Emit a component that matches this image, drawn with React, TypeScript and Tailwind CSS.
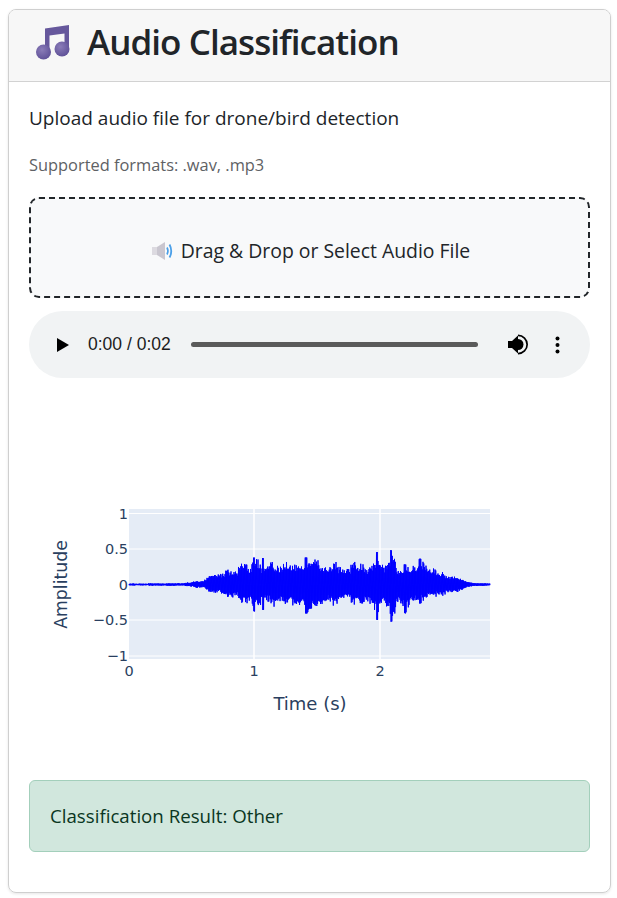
import { useId } from "react";

const PLOT_LEFT = 100;
const PLOT_WIDTH = 361;
const PLOT_TOP = 59;
const PLOT_HEIGHT = 150;
const ZERO_Y = 134.5;

// Envelope of the wave: screen x, height above zero, depth below zero
const ENVELOPE: Array<[number, number, number]> = [
  [129, 1, 1], [183, 1.5, 1.5], [196, 4, 4], [203, 5, 5], [208, 12, 9], [225, 16, 14],
  [240, 21, 19], [254, 27, 27], [270, 26, 24], [290, 26, 26], [306, 27, 29], [325, 25, 25],
  [340, 23, 20], [360, 23, 22], [372, 25, 29], [377, 33, 36], [384, 18, 17], [391, 35, 38],
  [398, 21, 23], [405, 20, 29], [412, 19, 18], [420, 26, 19], [430, 20, 14], [440, 13, 13],
  [450, 12, 11], [460, 7, 7], [470, 2.5, 2.5], [490, 1, 1],
];

const PEAKS = [254, 263, 306, 377, 391, 405, 420];

function envelopeAt(x: number) {
  for (let i = 1; i < ENVELOPE.length; i++) {
    const [x0, t0, b0] = ENVELOPE[i - 1];
    const [x1, t1, b1] = ENVELOPE[i];
    if (x <= x1) {
      const k = (x - x0) / (x1 - x0);
      return [t0 + (t1 - t0) * k, b0 + (b1 - b0) * k];
    }
  }
  return [1, 1];
}

function buildWavePath() {
  let seed = 4711;
  const rand = () => {
    seed = (seed * 16807) % 2147483647;
    return seed / 2147483647;
  };
  let d = "";
  let lobe = 0.85;
  for (let x = 129; x <= 490; x += 0.75) {
    // lobes a few pixels wide, with sharp spikes on top of a solid core
    if (Math.round(x / 0.75) % 6 === 0) lobe = 0.65 + rand() * 0.35;
    const [top, bottom] = envelopeAt(x);
    const peak = PEAKS.some((p) => Math.abs(p - x) < 1);
    const a = peak ? top : top * lobe * (0.62 + 0.38 * rand());
    const b = peak ? bottom : bottom * lobe * (0.62 + 0.38 * rand());
    d += `${d ? "L" : "M"}${x - 29} ${ZERO_Y - a}L${x - 28.7} ${ZERO_Y + b}`;
  }
  return d;
}

const WAVE_PATH = buildWavePath();

function MusicNote() {
  const id = useId();
  return (
    <svg width="36" height="38" viewBox="0 0 36 38" className="shrink-0">
      <defs>
        <radialGradient id={id} cx="0.4" cy="0.35" r="0.75">
          <stop offset="0" stopColor="#8a7cb8" />
          <stop offset="1" stopColor="#5a4c94" />
        </radialGradient>
      </defs>
      <path d="M10 6.5 L34 3 V27 H29.5 V11.5 L14.5 13.5 V31 H10 Z" fill="#66589c" />
      <circle cx="8.5" cy="30" r="7.5" fill={`url(#${id})`} />
      <circle cx="27" cy="27" r="7.5" fill={`url(#${id})`} />
    </svg>
  );
}

function SpeakerEmoji() {
  return (
    <svg width="22" height="20" viewBox="0 0 22 20" className="shrink-0">
      <rect x="1" y="6" width="6" height="8" fill="#dcdae0" />
      <path d="M6 6 L14 1 V19 L6 14 Z" fill="#c9c6cf" />
      <path d="M16 6.5 Q18 10 16 13.5" fill="none" stroke="#4a9fe8" strokeWidth="1.6" />
      <path d="M18.5 3.5 Q22 10 18.5 16.5" fill="none" stroke="#4a9fe8" strokeWidth="1.8" />
    </svg>
  );
}

function AudioPlayer() {
  return (
    <div className="mt-[13px] flex h-[67px] items-center rounded-[34px] bg-[#f1f3f4] pl-[28px] pr-[30px]">
      <svg width="12" height="14" viewBox="0 0 12 14" className="shrink-0">
        <path d="M0 0 L12 7 L0 14 Z" fill="#000" />
      </svg>
      <span className="ml-[19px] w-[83px] shrink-0 font-['Liberation_Sans',sans-serif] text-[17.5px] whitespace-nowrap text-[#1c1c1c]">
        0:00 / 0:02
      </span>
      <div className="ml-[20px] h-[5px] w-[287px] shrink-0 rounded-full bg-[#5a5a5a]" />
      <svg width="21" height="21" viewBox="0 0 21 21" className="ml-[30px] shrink-0">
        <path d="M0 7 H4 L10 1.5 V19.5 L4 14 H0 Z" fill="#000" />
        <path d="M10 0.5 A10 10 0 0 1 10 20.5 V18.8 A8.3 8.3 0 0 0 10 2.2 Z" fill="#000" />
        <path d="M10 5 A5.5 5.5 0 0 1 10 16 Z" fill="#000" />
      </svg>
      <svg width="5" height="18" viewBox="0 0 5 18" className="ml-[26px] shrink-0">
        <circle cx="2.5" cy="2.5" r="2" fill="#000" />
        <circle cx="2.5" cy="9" r="2" fill="#000" />
        <circle cx="2.5" cy="15.5" r="2" fill="#000" />
      </svg>
    </div>
  );
}

function WaveformPlot() {
  const yTicks = [
    { label: "1", y: 63.5 },
    { label: "0.5", y: 99 },
    { label: "0", y: 134.5 },
    { label: "−0.5", y: 170 },
    { label: "−1", y: 206 },
  ];
  const xTicks = [
    { label: "0", x: 100 },
    { label: "1", x: 225 },
    { label: "2", x: 351 },
  ];
  return (
    <svg width="561" height="272" viewBox="0 0 561 272" className="mt-[72px] block">
      <rect x={PLOT_LEFT} y={PLOT_TOP} width={PLOT_WIDTH} height={PLOT_HEIGHT} fill="#e5ecf6" />
      {yTicks.map((t) => (
        <line key={t.label} x1={PLOT_LEFT} x2={PLOT_LEFT + PLOT_WIDTH} y1={t.y} y2={t.y} stroke="#fff" strokeWidth="1" />
      ))}
      {xTicks.slice(1).map((t) => (
        <line key={t.label} x1={t.x} x2={t.x} y1={PLOT_TOP} y2={PLOT_TOP + PLOT_HEIGHT} stroke="#fff" strokeWidth="1.5" />
      ))}
      <path d={WAVE_PATH} fill="none" stroke="#0000ff" strokeWidth="1" />
      <g fill="#2a3f5f" fontFamily="'DejaVu Sans', sans-serif" fontSize="14.5">
        {yTicks.map((t) => (
          <text key={t.label} x="99" y={t.y + 5} textAnchor="end">
            {t.label}
          </text>
        ))}
        {xTicks.map((t) => (
          <text key={t.label} x={t.x} y="226" textAnchor="middle">
            {t.label}
          </text>
        ))}
      </g>
      <g fill="#2a3f5f" fontFamily="'DejaVu Sans', sans-serif">
        <text x="281" y="260" textAnchor="middle" fontSize="18">
          Time (s)
        </text>
        <text x="0" y="0" textAnchor="middle" fontSize="17.3" transform="translate(38 134.5) rotate(-90)">
          Amplitude
        </text>
      </g>
    </svg>
  );
}

export default function App() {
  return (
    <div className="h-[898px] bg-white px-2 pt-[9px] font-['Open_Sans',sans-serif]">
      <div className="h-[884px] w-[603px] overflow-hidden rounded-lg border border-[#cfcfcf] shadow-[0_1px_3px_rgba(0,0,0,0.1)]">
        <div className="flex h-[72px] items-center gap-[16px] border-b border-[#d2d2d2] bg-[#f7f7f7] pb-[9px] pl-[26px]">
          <MusicNote />
          <h1 className="text-[35px] leading-none font-semibold tracking-[-0.95px] whitespace-nowrap text-[#212529]">
            Audio Classification
          </h1>
        </div>
        <div className="px-5 pt-[22px]">
          <p className="text-[19px] leading-[28px] text-[#212529]">
            Upload audio file for drone/bird detection
          </p>
          <p className="mt-[21px] text-[16.4px] leading-[24px] text-[#5e6164]">
            Supported formats: .wav, .mp3
          </p>
          <div className="mt-[20px] flex h-[101px] items-center justify-center gap-[8px] rounded-[10px] border-2 border-dashed border-[#212529] bg-[#f8f9fa] pt-[7px] pl-[2px] text-[19.4px] text-[#212529]">
            <SpeakerEmoji />
            <span>Drag &amp; Drop or Select Audio File</span>
          </div>
          <AudioPlayer />
          <WaveformPlot />
          <div className="mt-[58px] flex h-[72px] items-center rounded-md border border-[#a3cfbb] bg-[#d1e7dd] px-5 text-[18.7px] text-[#0a3622]">
            Classification Result: Other
          </div>
        </div>
      </div>
    </div>
  );
}
